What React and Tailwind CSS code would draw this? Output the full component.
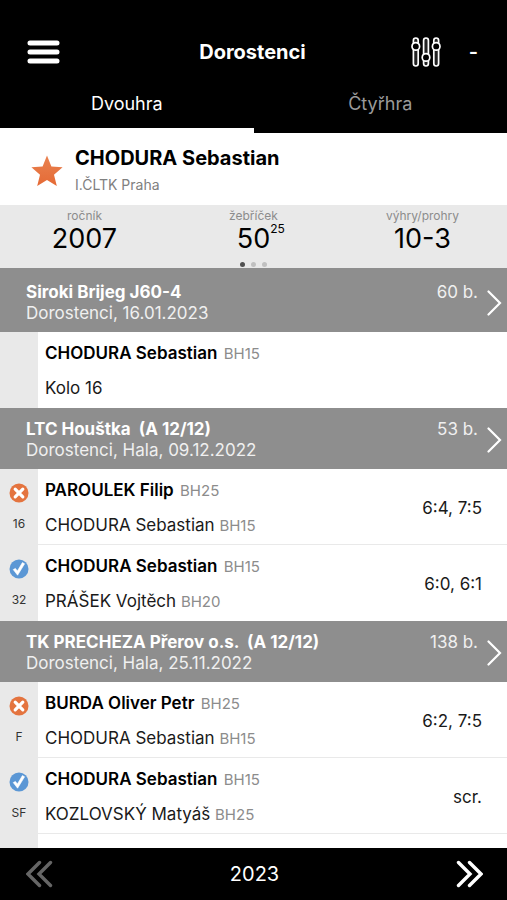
import React from "react";

const tournaments = [
  {
    name: "Siroki Brijeg J60-4",
    info: "Dorostenci, 16.01.2023",
    points: "60 b.",
    matches: [
      { winner: ["CHODURA Sebastian", "BH15"], loser: ["Kolo 16", ""], score: "", round: "" },
    ],
  },
  {
    name: "LTC Houštka  (A 12/12)",
    info: "Dorostenci, Hala, 09.12.2022",
    points: "53 b.",
    matches: [
      { result: "loss", round: "16", winner: ["PAROULEK Filip", "BH25"], loser: ["CHODURA Sebastian", "BH15"], score: "6:4, 7:5" },
      { result: "win", round: "32", winner: ["CHODURA Sebastian", "BH15"], loser: ["PRÁŠEK Vojtěch", "BH20"], score: "6:0, 6:1" },
    ],
  },
  {
    name: "TK PRECHEZA Přerov o.s.  (A 12/12)",
    info: "Dorostenci, Hala, 25.11.2022",
    points: "138 b.",
    matches: [
      { result: "loss", round: "F", winner: ["BURDA Oliver Petr", "BH25"], loser: ["CHODURA Sebastian", "BH15"], score: "6:2, 7:5" },
      { result: "win", round: "SF", winner: ["CHODURA Sebastian", "BH15"], loser: ["KOZLOVSKÝ Matyáš", "BH25"], score: "scr." },
      { round: "", winner: ["", ""], loser: ["", ""], score: "" },
    ],
  },
];

function MenuIcon() {
  return (
    <svg width="33" height="24" viewBox="0 0 33 24" stroke="#fff" strokeWidth="5" strokeLinecap="round" aria-hidden="true">
      <path d="M3 2.9h27M3 12h27M3 21.1h27" />
    </svg>
  );
}

function SlidersIcon() {
  return (
    <svg width="30" height="30" viewBox="0 0 30 30" fill="#000" stroke="#fff" strokeWidth="1.7" aria-hidden="true">
      <rect x="2.4" y="1" width="4.8" height="28" rx="2.4" fill="#222" />
      <rect x="12.6" y="1" width="4.8" height="28" rx="2.4" fill="#222" />
      <rect x="22.8" y="1" width="4.8" height="28" rx="2.4" fill="#222" />
      <circle cx="4.8" cy="9.4" r="3.8" />
      <circle cx="15" cy="20.4" r="3.8" />
      <circle cx="25.2" cy="9.4" r="3.8" />
    </svg>
  );
}

function StarIcon() {
  return (
    <svg className="shrink-0" width="32" height="32" viewBox="0 0 32 32" aria-hidden="true">
      <defs>
        <linearGradient id="star" x1="0" y1="0" x2="0" y2="1">
          <stop offset="0" stopColor="#e98250" />
          <stop offset="1" stopColor="#e56a35" />
        </linearGradient>
      </defs>
      <path fill="url(#star)" d="M16 .5l4.4 10.9 11.2.8-8.6 7.5 2.8 11.3L16 25l-9.8 6L9 19.7.4 12.2l11.2-.8z" />
    </svg>
  );
}

function ResultIcon({ result }) {
  if (result === "loss") {
    return (
      <svg width="20" height="20" viewBox="0 0 20 20" role="img" aria-label="Prohra">
        <circle cx="10" cy="10" r="9.5" fill="#e4743f" />
        <path d="M6.2 6.2l7.6 7.6M13.8 6.2l-7.6 7.6" stroke="#fff" strokeWidth="3.2" strokeLinecap="round" />
      </svg>
    );
  }
  return (
    <svg width="20" height="20" viewBox="0 0 20 20" role="img" aria-label="Výhra">
      <circle cx="10" cy="10" r="9.5" fill="#5b97d5" />
      <path d="M4.2 10.6l4.4 5.6 7-11.4-2.2-1.2-5 8.4-2-2.6z" fill="#fff" stroke="#fff" strokeWidth=".6" strokeLinejoin="round" />
    </svg>
  );
}

function Stat({ label, value, sup }) {
  return (
    <div className="flex flex-col items-center pt-[3px]">
      <span className="text-xs leading-4 text-[#8c8c8c]">{label}</span>
      <span className="relative text-[27px] leading-[30px] text-black">
        {value}
        {sup && <sup className="absolute -top-px left-full text-xs leading-none">{sup}</sup>}
      </span>
    </div>
  );
}

function Player({ player, bold }) {
  return (
    <p className={bold ? "h-[35px] text-[17px] leading-6 font-semibold text-black" : "text-[17px] leading-6 text-[#1a1a1a]"}>
      {player[0]} <span className={bold ? "ml-0.5 text-[15px] font-normal text-[#8c8c8c]" : "text-[15px] text-[#8c8c8c]"}>{player[1]}</span>
    </p>
  );
}

function Match({ match }) {
  return (
    <li className="flex h-[76px] border-b border-[#e9e9e9] last:border-b-0">
      <div className="flex w-[38px] shrink-0 flex-col items-center gap-3 bg-[#e9e9e9] pt-3.5">
        {match.result && <ResultIcon result={match.result} />}
        <span className="text-xs leading-[18px] text-[#333]">{match.round}</span>
      </div>
      <div className="min-w-0 flex-1 pt-[9px] pl-[7px]">
        <Player player={match.winner} bold />
        <Player player={match.loser} />
      </div>
      <span className="self-center pt-0.5 pr-[25px] text-[17px] leading-6 text-[#1a1a1a]">{match.score}</span>
    </li>
  );
}

function Tournament({ item }) {
  return (
    <section className="group">
      <a href="#turnaj" className="flex bg-[#8e8e8e] pt-[11px] pr-1 pb-2 pl-[26px] text-white group-first:pt-3.5">
        <div className="min-w-0 flex-1">
          <h2 className="text-[17px] leading-[21px] font-bold whitespace-pre">{item.name}</h2>
          <p className="text-[17px] leading-[21px] text-[#f0f0f0]">{item.info}</p>
        </div>
        <span className="text-[17px] leading-[21px] text-[#f0f0f0]">{item.points}</span>
        <svg className="ml-2 self-center" width="17" height="26" viewBox="0 0 17 26" fill="none" stroke="#fff" strokeWidth="2.2" strokeLinecap="round" aria-hidden="true">
          <path d="M2.5 1.5L14 13 2.5 24.5" />
        </svg>
      </a>
      <ul>
        {item.matches.map((match, i) => (
          <Match key={i} match={match} />
        ))}
      </ul>
    </section>
  );
}

function DoubleChevron({ flip }) {
  return (
    <svg className={flip ? "-scale-x-100" : ""} width="27" height="28" viewBox="0 0 27 28" fill="none" stroke="currentColor" strokeWidth="3.4" strokeLinecap="round" aria-hidden="true">
      <path d="M2.5 2.5L14 14 2.5 25.5M13.5 2.5L25 14 13.5 25.5" />
    </svg>
  );
}

export default function App() {
  return (
    <div className="flex h-screen flex-col bg-white font-[Inter,'Liberation_Sans',sans-serif]">
      <header className="shrink-0 bg-black text-white">
        <div className="grid h-[76px] grid-cols-3 items-center pt-7 pr-[29px] pl-[27px]">
          <button type="button" aria-label="Menu" className="justify-self-start">
            <MenuIcon />
          </button>
          <h1 className="text-center text-xl font-bold">Dorostenci</h1>
          <div className="flex items-center gap-7 justify-self-end">
            <button type="button" aria-label="Filtr">
              <SlidersIcon />
            </button>
            <span className="text-xl leading-6 font-semibold">-</span>
          </div>
        </div>
        <nav className="flex h-[57px]">
          <button type="button" className="flex-1 border-b-5 border-white pt-1 text-lg">Dvouhra</button>
          <button type="button" className="flex-1 border-b-5 border-black pt-1 text-lg text-[#9a9a9a]">Čtyřhra</button>
        </nav>
      </header>

      <div className="flex h-[72px] shrink-0 items-center gap-3 pt-[3px] pl-[31px]">
        <StarIcon />
        <div>
          <h2 className="text-xl leading-7 font-bold text-black">CHODURA Sebastian</h2>
          <p className="text-sm leading-[26px] text-[#808080]">I.ČLTK Praha</p>
        </div>
      </div>

      <div className="h-[63px] shrink-0 bg-[#e9e9e9]">
        <div className="grid grid-cols-3">
          <Stat label="ročník" value="2007" />
          <Stat label="žebříček" value="50" sup="25" />
          <Stat label="výhry/prohry" value="10-3" />
        </div>
        <div className="mt-2 flex justify-center gap-1.5">
          <span className="size-[5px] rounded-full bg-[#505050]" />
          <span className="size-[5px] rounded-full bg-[#c0c0c0]" />
          <span className="size-[5px] rounded-full bg-[#c0c0c0]" />
        </div>
      </div>

      <main className="min-h-0 flex-1 overflow-hidden">
        {tournaments.map((item) => (
          <Tournament key={item.name} item={item} />
        ))}
      </main>

      <footer className="flex h-[52px] shrink-0 items-center justify-between bg-black pr-6 pl-[26px] text-white">
        <button type="button" aria-label="Předchozí rok" className="text-[#666]">
          <DoubleChevron flip />
        </button>
        <span className="text-xl">2023</span>
        <button type="button" aria-label="Další rok">
          <DoubleChevron />
        </button>
      </footer>
    </div>
  );
}
